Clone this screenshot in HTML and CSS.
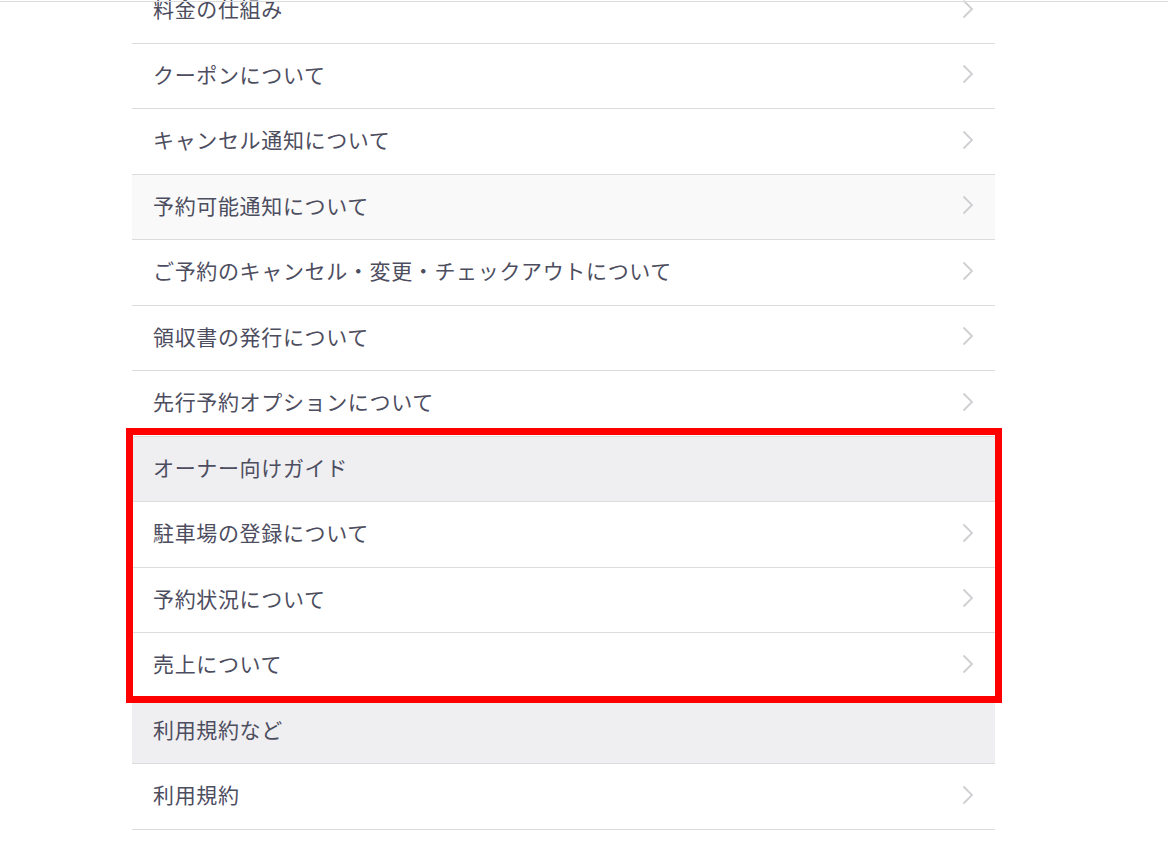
FILE: index.html
```html
<!DOCTYPE html>
<html lang="ja">
<head>
<meta charset="utf-8">
<title>ヘルプ</title>
<link rel="stylesheet" href="styles.css">
</head>
<body>
<div class="topline"></div>
<main class="page">
  <ul class="menu">
    <li class="row"><span class="label">料金の仕組み</span><svg class="chev" viewBox="0 0 12 20"><path d="M1.5 1.5 L10 10 L1.5 18.5"/></svg></li>
    <li class="row"><span class="label">クーポンについて</span><svg class="chev" viewBox="0 0 12 20"><path d="M1.5 1.5 L10 10 L1.5 18.5"/></svg></li>
    <li class="row"><span class="label">キャンセル通知について</span><svg class="chev" viewBox="0 0 12 20"><path d="M1.5 1.5 L10 10 L1.5 18.5"/></svg></li>
    <li class="row row-hover"><span class="label">予約可能通知について</span><svg class="chev" viewBox="0 0 12 20"><path d="M1.5 1.5 L10 10 L1.5 18.5"/></svg></li>
    <li class="row"><span class="label">ご予約のキャンセル・変更・チェックアウトについて</span><svg class="chev" viewBox="0 0 12 20"><path d="M1.5 1.5 L10 10 L1.5 18.5"/></svg></li>
    <li class="row"><span class="label">領収書の発行について</span><svg class="chev" viewBox="0 0 12 20"><path d="M1.5 1.5 L10 10 L1.5 18.5"/></svg></li>
    <li class="row"><span class="label">先行予約オプションについて</span><svg class="chev" viewBox="0 0 12 20"><path d="M1.5 1.5 L10 10 L1.5 18.5"/></svg></li>
    <li class="row section"><span class="label">オーナー向けガイド</span></li>
    <li class="row"><span class="label">駐車場の登録について</span><svg class="chev" viewBox="0 0 12 20"><path d="M1.5 1.5 L10 10 L1.5 18.5"/></svg></li>
    <li class="row"><span class="label">予約状況について</span><svg class="chev" viewBox="0 0 12 20"><path d="M1.5 1.5 L10 10 L1.5 18.5"/></svg></li>
    <li class="row"><span class="label">売上について</span><svg class="chev" viewBox="0 0 12 20"><path d="M1.5 1.5 L10 10 L1.5 18.5"/></svg></li>
    <li class="row section"><span class="label">利用規約など</span></li>
    <li class="row"><span class="label">利用規約</span><svg class="chev" viewBox="0 0 12 20"><path d="M1.5 1.5 L10 10 L1.5 18.5"/></svg></li>
  </ul>
  <div class="highlight"></div>
</main>
</body>
</html>
```

FILE: styles.css
```css
html, body {
  margin: 0;
  padding: 0;
  background: #ffffff;
  overflow: hidden;
}

body {
  font-family: "Noto Sans CJK JP", "Noto Sans", sans-serif;
  color: #4d4d60;
}

.topline {
  position: fixed;
  top: 1px;
  left: 0;
  right: 0;
  height: 1px;
  background: #dcdcdc;
  z-index: 5;
}

.page {
  position: relative;
  width: 863px;
  margin: -22px 0 0 132px;
}

.menu {
  list-style: none;
  margin: 0;
  padding: 0;
}

.row {
  display: flex;
  align-items: center;
  justify-content: space-between;
  height: 65.5px;
  box-sizing: border-box;
  border-bottom: 1px solid #dcdcdc;
  padding: 0 21px 3px 21px;
  background: #ffffff;
}

.row-hover {
  background: #f9f9f9;
}

.section {
  background: #efeff2;
}

.label {
  font-size: 21px;
  letter-spacing: 0.65px;
  line-height: 1;
  white-space: nowrap;
}

.chev {
  width: 12px;
  height: 20px;
  flex: none;
}

.chev path {
  fill: none;
  stroke: #cfcfd3;
  stroke-width: 1.8;
}

.highlight {
  position: absolute;
  left: -6px;
  top: 450px;
  width: 876px;
  height: 275px;
  box-sizing: border-box;
  border: 7.5px solid #ff0000;
  pointer-events: none;
}
```
